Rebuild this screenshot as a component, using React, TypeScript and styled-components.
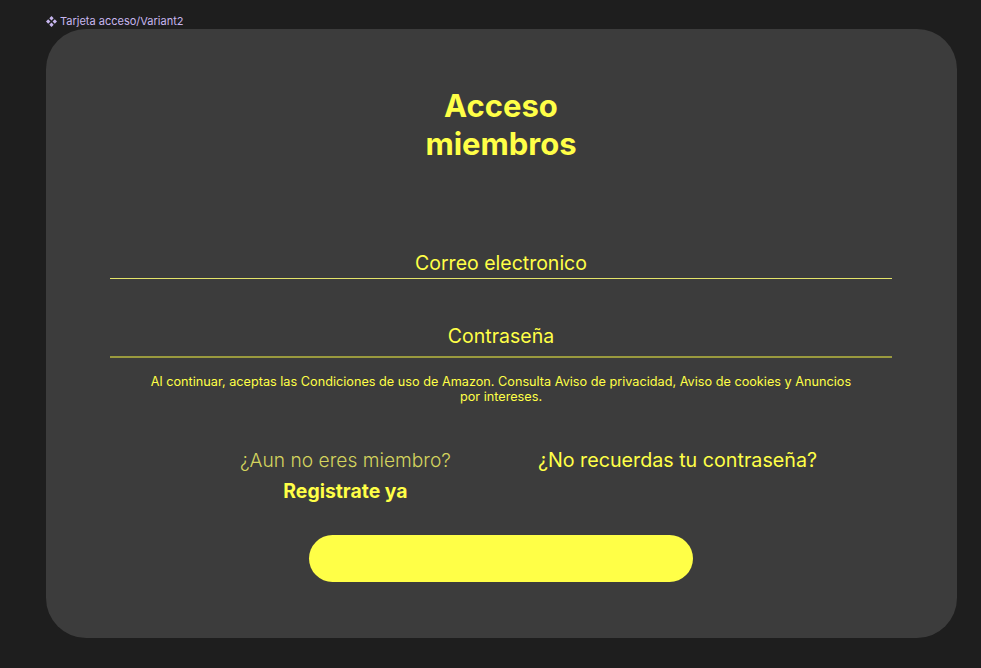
import React from "react";
import styled, { createGlobalStyle } from "styled-components";

const Global = createGlobalStyle`
  html, body { margin: 0; padding: 0; background: #1e1e1e; }
  body { font-family: Inter, "Noto Sans", sans-serif; }
  * { box-sizing: border-box; }
`;

const Page = styled.div`
  width: 981px;
  height: 668px;
  padding: 14px 24px 0 46px;
  display: flex;
  flex-direction: column;
`;

const FrameLabel = styled.div`
  display: flex;
  align-items: center;
  gap: 3px;
  height: 14px;
  font-size: 11px;
  color: #c7b6ee;
  margin-bottom: 1px;
`;

const Card = styled.div`
  width: 911px;
  height: 609px;
  background: #3c3c3c;
  border-radius: 40px;
  padding: 58px 65px 0 64px;
  display: flex;
  flex-direction: column;
  align-items: center;
  color: #ffff47;
`;

const Title = styled.h1`
  margin: 0;
  font-size: 31px;
  line-height: 38px;
  font-weight: 700;
  text-align: center;
`;

const Field = styled.div<{ $line: string; $thick: number; $top: number; $pad: number }>`
  width: 100%;
  margin-top: ${(p) => p.$top}px;
  padding-bottom: ${(p) => p.$pad}px;
  border-bottom: ${(p) => p.$thick}px solid ${(p) => p.$line};
  text-align: center;
  font-size: 19.5px;
  line-height: 24px;
  font-weight: 400;
`;

const Legal = styled.p`
  margin: 16px 0 0;
  width: 712px;
  font-size: 12.7px;
  line-height: 15px;
  text-align: center;
`;

const LinksRow = styled.div`
  width: 100%;
  display: flex;
  padding-left: 130px;
  gap: 87px;
  margin-top: 44px;
`;

const LinkColumn = styled.div`
  display: flex;
  flex-direction: column;
  align-items: center;
  gap: 7px;
`;

const LinkText = styled.span<{ $weight: number; $dim?: boolean; $size: number }>`
  font-size: ${(p) => p.$size}px;
  line-height: 24px;
  font-weight: ${(p) => p.$weight};
  color: ${(p) => (p.$dim ? "#d4d45e" : "#ffff47")};
`;

const SubmitButton = styled.button`
  margin-top: 32px;
  width: 384px;
  height: 47px;
  border: none;
  border-radius: 24px;
  background: #ffff47;
  cursor: pointer;
  margin-left: -1px;
`;

const ComponentIcon = () => (
  <svg width="11" height="11" viewBox="0 0 12 12" fill="#c7b6ee">
    <path d="M6 0 L8.4 2.4 L6 4.8 L3.6 2.4 Z" />
    <path d="M6 7.2 L8.4 9.6 L6 12 L3.6 9.6 Z" />
    <path d="M2.4 3.6 L4.8 6 L2.4 8.4 L0 6 Z" />
    <path d="M9.6 3.6 L12 6 L9.6 8.4 L7.2 6 Z" />
  </svg>
);

export default function App() {
  return (
    <>
      <Global />
      <Page>
        <FrameLabel>
          <ComponentIcon />
          Tarjeta acceso/Variant2
        </FrameLabel>
        <Card>
          <Title>
            Acceso
            <br />
            miembros
          </Title>
          <Field $line="#e4e46a" $thick={1} $top={88} $pad={3}>
            Correo electronico
          </Field>
          <Field $line="#9a9a3e" $thick={2} $top={45} $pad={8}>
            Contraseña
          </Field>
          <Legal>
            Al continuar, aceptas las Condiciones de uso de Amazon. Consulta Aviso de privacidad, Aviso de cookies y Anuncios por intereses.
          </Legal>
          <LinksRow>
            <LinkColumn>
              <LinkText $weight={300} $size={19.2} $dim>¿Aun no eres miembro?</LinkText>
              <LinkText $weight={700} $size={19.4}>Registrate ya</LinkText>
            </LinkColumn>
            <LinkColumn>
              <LinkText $weight={400} $size={19.7}>¿No recuerdas tu contraseña?</LinkText>
            </LinkColumn>
          </LinksRow>
          <SubmitButton aria-label="Acceder" />
        </Card>
      </Page>
    </>
  );
}
